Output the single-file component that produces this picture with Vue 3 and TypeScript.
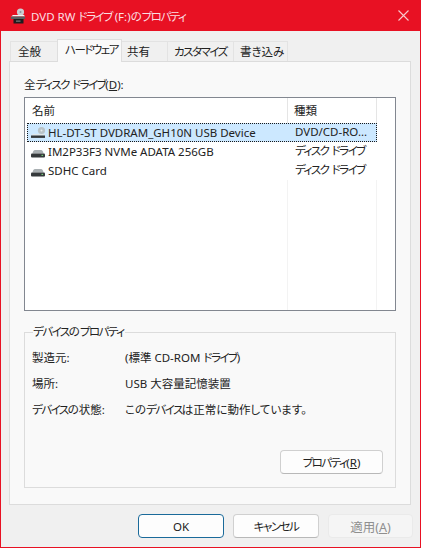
<script setup lang="ts">
import { h } from 'vue'

const K = (props: { t: string }) =>
  props.t
    .split(/([\u30a0-\u30ff]+)/)
    .filter(Boolean)
    .map((s) => h('span', { class: /[\u30a0-\u30ff]/.test(s) ? 'kn' : undefined }, s))
K.props = ['t']

const tabs = [
  { label: '全般', w: 48, pad: 7 },
  { label: 'ハードウェア', w: 65, pad: 7, active: true },
  { label: '共有', w: 47, pad: 5 },
  { label: 'カスタマイズ', w: 67, pad: 6 },
  { label: '書き込み', w: 55, pad: 6 },
]
const rows = [
  { icon: 'dvd', name: 'HL-DT-ST DVDRAM_GH10N USB Device', type: 'DVD/CD-RO...', selected: true },
  { icon: 'disk', name: 'IM2P33F3 NVMe ADATA 256GB', type: 'ディスク ドライブ' },
  { icon: 'disk', name: 'SDHC Card', type: 'ディスク ドライブ' },
]
const props = [
  { k: '製造元:', v: '(標準 CD-ROM ドライブ)' },
  { k: '場所:', v: 'USB 大容量記憶装置' },
  { k: 'デバイスの状態:', v: 'このデバイスは正常に動作しています。' },
]
</script>

<template>
  <div class="window">
    <header class="titlebar">
      <svg class="title-icon" width="16" height="16" viewBox="0 0 16 16">
        <circle cx="10.5" cy="4" r="3.6" fill="#c9ced2" />
        <circle cx="10.5" cy="4" r="1" fill="#8d9398" />
        <path d="M1 8.5 L3 7 H14 L15 8.5 Z" fill="#f4f4f4" />
        <rect x="1" y="8.5" width="14" height="2.5" fill="#5a5d60" />
        <rect x="3.5" y="11" width="10" height="4.5" fill="#1d1d1f" />
        <rect x="6" y="12.6" width="4.5" height="1" fill="#8f8f8f" />
      </svg>
      <span class="title-text"><K t="DVD RW ドライブ (F:)のプロパティ" /></span>
      <svg class="close" width="11" height="11" viewBox="0 0 11 11">
        <path d="M.5 .5 L10.5 10.5 M10.5 .5 L.5 10.5" stroke="#f7c9cd" stroke-width="1.1" fill="none" />
      </svg>
    </header>

    <main class="body">
      <nav class="tabs">
        <div
          v-for="t in tabs"
          :key="t.label"
          class="tab"
          :class="{ active: t.active }"
          :style="{ width: t.w + 'px', paddingLeft: t.pad + 'px' }"
        ><K :t="t.label" /></div>
      </nav>

      <section class="panel">
        <div class="list-label"><K t="全ディスク ドライブ" />(<u>D</u>):</div>
        <div class="list">
          <div class="list-head">
            <div class="col-name">名前</div>
            <div class="col-type">種類</div>
          </div>
          <div
            v-for="r in rows"
            :key="r.name"
            class="row"
            :class="{ selected: r.selected }"
          >
            <div class="cell-name">
              <svg width="16" height="16" viewBox="0 0 16 16" class="row-icon">
                <template v-if="r.icon === 'dvd'">
                  <circle cx="11.5" cy="5.5" r="3.6" fill="#b9c3c8" />
                  <circle cx="11.5" cy="5.5" r="1" fill="#e6edf0" />
                  <path d="M1 10.5 L3 9 H15 V10.5 Z" fill="#dfe6e8" />
                  <rect x="1" y="10.5" width="14" height="2.4" fill="#33373a" />
                </template>
                <template v-else>
                  <path d="M2.5 9.5 Q3 6 5 6 H11 Q13 6 13.5 9.5 Z" fill="#a9afb2" />
                  <rect x="1" y="9.5" width="14" height="4" rx="1" fill="#35393b" />
                  <rect x="11.5" y="10.8" width="1.6" height="1.2" fill="#74c874" />
                </template>
              </svg>
              <span class="name-text">{{ r.name }}</span>
            </div>
            <div class="cell-type"><K :t="r.type" /></div>
          </div>
          <div class="list-fill">
            <div class="fill-name"></div>
            <div class="fill-type"></div>
          </div>
        </div>

        <fieldset class="group">
          <legend><K t="デバイスのプロパティ" /></legend>
          <div v-for="p in props" :key="p.k" class="prop">
            <span class="prop-key"><K :t="p.k" /></span>
            <span class="prop-val"><K :t="p.v" /></span>
          </div>
          <div class="group-foot">
            <button class="btn prop-btn"><K t="プロパティ" />(<u>R</u>)</button>
          </div>
        </fieldset>
      </section>

      <footer class="actions">
        <button class="btn primary">OK</button>
        <button class="btn"><K t="キャンセル" /></button>
        <button class="btn disabled apply">適用(<u>A</u>)</button>
      </footer>
    </main>
  </div>
</template>

<style>
html, body { margin: 0; padding: 0; background: #e81123; }
.kn { letter-spacing: -1.5px; }
</style>

<style scoped>
.window {
  width: 421px;
  height: 548px;
  box-sizing: border-box;
  display: flex;
  flex-direction: column;
  background: #e81123;
  font-family: "Noto Sans", "Noto Sans CJK JP", sans-serif;
  font-size: 11.5px;
  font-feature-settings: "palt";
  color: #222;
  overflow: hidden;
}
.titlebar {
  height: 31px;
  flex: none;
  display: flex;
  align-items: center;
  padding: 0 8px 0 10px;
  background: #e81123;
  color: #fbdfe1;
}
.title-icon { flex: none; margin-right: 5px; }
.title-text { flex: 1; white-space: nowrap; }
.close { flex: none; margin-right: 4px; }
.body {
  flex: 1;
  margin: 0 1px 1px;
  background: #f0f0f0;
  display: flex;
  flex-direction: column;
  padding: 10px 9px 0 8px;
  min-height: 0;
}
.tabs {
  display: flex;
  height: 20px;
  align-items: flex-end;
  padding-left: 2px;
  position: relative;
  z-index: 1;
  flex: none;
}
.tab {
  height: 20px;
  box-sizing: border-box;
  border: 1px solid #e3e3e3;
  border-bottom: none;
  margin-left: -1px;
  background: #f0f0f0;
  display: flex;
  align-items: center;
  white-space: nowrap;
  line-height: 1;
}
.tab.active {
  height: 23px;
  background: #f9f9f9;
  margin-bottom: -1px;
  padding-bottom: 2px;
  border-color: #dedede;
  position: relative;
  z-index: 2;
}
.panel {
  flex: none;
  height: 444px;
  box-sizing: border-box;
  border: 1px solid #dcdcdc;
  background: #f9f9f9;
  padding: 14px 14px 0;
  display: flex;
  flex-direction: column;
}
.list-label { height: 21px; line-height: 17px; }
.list {
  height: 214px;
  flex: none;
  box-sizing: border-box;
  border: 1px solid #828790;
  background: #fff;
  display: flex;
  flex-direction: column;
  padding-left: 2px;
}
.list-head { display: flex; height: 25px; flex: none; line-height: 26px; }
.col-name { width: 261px; padding-left: 5px; box-sizing: border-box; border-right: 1px solid #e5e5e5; }
.col-type { width: 89px; padding-left: 6px; box-sizing: border-box; border-right: 1px solid #e5e5e5; }
.row { display: flex; height: 19px; width: 350px; box-sizing: border-box; line-height: 18px; white-space: nowrap; }
.row.selected {
  background: #cce8ff;
  outline: 1px dotted #1a1a1a;
  outline-offset: -1px;
}
.cell-name { width: 261px; display: flex; align-items: center; gap: 2px; padding-left: 3px; box-sizing: border-box; }
.row-icon { flex: none; }
.cell-type { width: 89px; padding-left: 7px; box-sizing: border-box; overflow: hidden; }
.list-fill { flex: 1; display: flex; }
.fill-name { width: 261px; box-sizing: border-box; border-right: 1px solid #f3f3f3; }
.fill-type { width: 89px; box-sizing: border-box; border-right: 1px solid #f3f3f3; }
.group {
  margin: 13px 0 0;
  padding: 9px 0 0 7px;
  height: 164px;
  box-sizing: border-box;
  border: 1px solid #dcdcdc;
  min-width: 0;
}
.group legend { padding: 0 1px 0 0; margin-left: 1px; line-height: 16px; }
.prop { display: flex; height: 26px; line-height: 18px; white-space: nowrap; }
.prop-key { width: 93px; flex: none; }
.group-foot { display: flex; justify-content: flex-end; padding: 23px 12px 0 0; }
.btn {
  font: inherit;
  font-feature-settings: "palt";
  color: #222;
  height: 24px;
  box-sizing: border-box;
  border: 1px solid #d0d0d0;
  border-bottom-color: #b8b8b8;
  border-radius: 4px;
  background: #fdfdfd;
  padding: 0;
}
.prop-btn { width: 103px; }
.actions {
  display: flex;
  justify-content: flex-end;
  gap: 9px;
  padding-top: 9px;
  flex: none;
}
.actions .btn { width: 86px; }
.actions .primary { border: 1px solid #1a6a9a; }
.actions .disabled {
  width: 85px;
  margin-right: -2px;
  background: #f5f5f5;
  border-color: #eaeaea;
  color: #8f8f8f;
}
.actions .apply { font-size: 12.5px; }
</style>
